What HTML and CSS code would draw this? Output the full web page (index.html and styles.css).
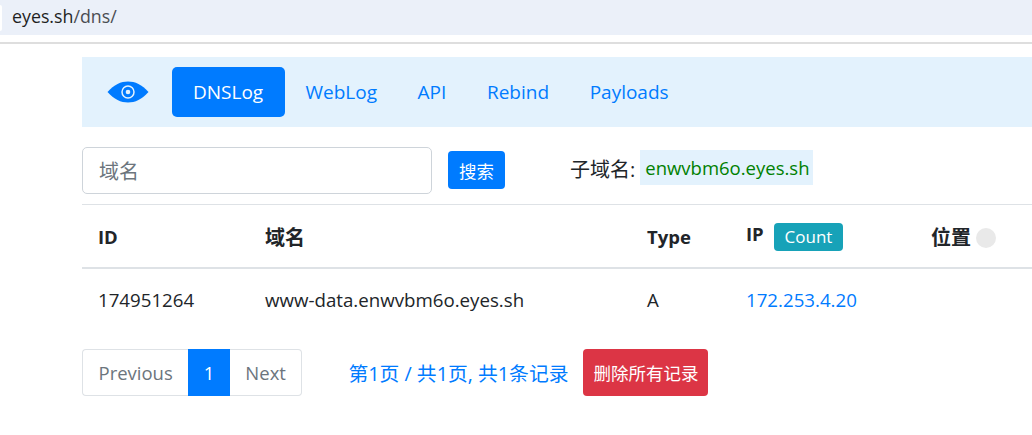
FILE: index.html
```html
<!DOCTYPE html>
<html lang="en">
<head>
  <meta charset="UTF-8" />
  <meta name="viewport" content="width=device-width, initial-scale=1.0"/>
  <title>DNSLog</title>
  <link rel="stylesheet" href="styles.css">
</head>
<body>
  <div class="browser-bar">
    <div class="address-bar">
      <span class="address-cap"></span>
      <span class="address-text"><span class="address-host">eyes.sh</span>/dns/</span>
    </div>
  </div>

  <div class="container">
    <nav class="navbar">
      <a class="brand" href="#">
        <svg width="42" height="22" viewBox="0 0 42 22">
          <path d="M0.5 11C7 3.5 14 0.5 21 0.5S35 3.5 41.5 11C35 18.500 28 21.500 21 21.500S7 18.500 0.5 11Z" fill="#007bff"/>
          <circle cx="21" cy="11" r="6" fill="none" stroke="#e3f2fd" stroke-width="1.500"/>
          <circle cx="21" cy="11" r="2.300" fill="#e3f2fd"/>
        </svg>
      </a>
      <a class="nav-link active" href="#">DNSLog</a>
      <a class="nav-link" href="#">WebLog</a>
      <a class="nav-link" href="#">API</a>
      <a class="nav-link" href="#">Rebind</a>
      <a class="nav-link" href="#">Payloads</a>
    </nav>

    <form class="search-row">
      <input class="search-input" type="text" placeholder="域名">
      <button class="search-btn" type="button">搜索</button>
      <span class="subdomain-label">子域名:</span>
      <code class="subdomain">enwvbm6o.eyes.sh</code>
    </form>

    <table class="records">
      <thead>
        <tr>
          <th class="col-id">ID</th>
          <th class="col-domain">域名</th>
          <th class="col-type">Type</th>
          <th class="col-ip">IP <span class="badge">Count</span></th>
          <th class="col-loc">位置 <span class="dot"></span></th>
        </tr>
      </thead>
      <tbody>
        <tr>
          <td>174951264</td>
          <td>www-data.enwvbm6o.eyes.sh</td>
          <td>A</td>
          <td><a href="#">172.253.4.20</a></td>
          <td></td>
        </tr>
      </tbody>
    </table>

    <div class="pager-row">
      <ul class="pagination">
        <li class="page-item">Previous</li>
        <li class="page-item current">1</li>
        <li class="page-item">Next</li>
      </ul>
      <a class="page-info" href="#">第1页 / 共1页, 共1条记录</a>
      <button class="delete-btn" type="button">删除所有记录</button>
    </div>
  </div>
</body>
</html>
```

FILE: styles.css
```css
/* Base */
html, body {
  overflow: hidden;
}

body {
  margin: 0;
  font-family: "Open Sans", "Noto Sans CJK SC", sans-serif;
  font-size: 18.500px;
  color: #212529;
  background-color: #fff;
}

a {
  text-decoration: none;
}

/* Browser address bar */
.browser-bar {
  padding-bottom: 7px;
  border-bottom: 2px solid #dedede;
}

.address-bar {
  display: flex;
  align-items: center;
  height: 35px;
  background-color: #ebf0f9;
}

.address-cap {
  width: 2px;
  height: 26px;
  background-color: #fff;
  border-radius: 0 13px 13px 0;
}

.address-text {
  margin-left: 10px;
  margin-top: -4px;
  font-size: 17.800px;
  color: #4a4d52;
}

.address-host {
  color: #1f1f1f;
}

/* Page */
.container {
  padding: 13px 0 0 82px;
}

/* Navbar */
.navbar {
  display: flex;
  align-items: center;
  height: 70px;
  padding-left: 25px;
  background-color: #e3f2fd;
}

.brand {
  display: flex;
  margin-right: 23px;
}

.nav-link {
  padding: 1px 20.300px 0;
  line-height: 49px;
  font-size: 19px;
  color: #007bff;
  border-radius: 5px;
}

.nav-link.active {
  padding: 1px 22px 0 21px;
  color: #fff;
  background-color: #007bff;
}

/* Search row */
.search-row {
  display: flex;
  align-items: center;
  height: 47px;
  margin-top: 20px;
}

.search-input {
  box-sizing: border-box;
  width: 350px;
  height: 47px;
  padding: 1px 16px 0;
  font: inherit;
  font-size: 20px;
  border: 1px solid #ced4da;
  border-radius: 5px;
}

.search-input::placeholder {
  color: #6c757d;
}

.search-btn {
  width: 57px;
  height: 38px;
  margin: -1px 0 0 16px;
  padding: 0;
  font: inherit;
  font-size: 17.500px;
  color: #fff;
  background-color: #007bff;
  border: none;
  border-radius: 4px;
}

.subdomain-label {
  margin-left: 65px;
  margin-top: -4px;
  font-size: 20px;
}

.subdomain {
  margin-left: 5px;
  margin-top: -7px;
  padding: 0 4px 0 5px;
  line-height: 35px;
  font-family: inherit;
  color: #008000;
  background-color: #e3f2fd;
}

/* Records table */
.records {
  table-layout: fixed;
  width: 950px;
  margin-top: 10px;
  border-collapse: collapse;
}

.records th, .records td {
  padding: 0 16px;
  text-align: left;
  vertical-align: middle;
}

.records th {
  height: 62px;
  font-weight: 700;
  border-top: 1px solid #dee2e6;
  border-bottom: 2px solid #dee2e6;
}

.records td {
  height: 61px;
  font-size: 18.700px;
}

.records a {
  color: #007bff;
}

.col-id { width: 135px; }
.col-domain { width: 350px; font-size: 20px; }
.col-type { width: 67px; }
.col-ip { width: 153px; }
.col-loc { width: 85px; font-size: 20px; white-space: nowrap; }

.badge {
  display: inline-block;
  margin-left: 5px;
  padding: 0 11px;
  line-height: 28px;
  vertical-align: -2px;
  font-size: 17px;
  font-weight: 400;
  color: #fff;
  background-color: #17a2b8;
  border-radius: 4px;
}

.dot {
  display: inline-block;
  width: 20px;
  height: 20px;
  vertical-align: -3px;
  background-color: #e9e9e9;
  border-radius: 50%;
}

/* Pagination */
.pager-row {
  display: flex;
  align-items: center;
  margin-top: 19px;
}

.pagination {
  display: flex;
  margin: 0;
  padding: 0;
  list-style: none;
}

.page-item {
  padding: 0 15.500px;
  line-height: 45px;
  color: #6c757d;
  border: 1px solid #dee2e6;
}

.page-item:first-child {
  border-right: none;
  border-radius: 4px 0 0 4px;
}

.page-item:last-child {
  border-left: none;
  border-radius: 0 4px 4px 0;
}

.page-item.current {
  color: #fff;
  background-color: #007bff;
  border-color: #007bff;
  border-width: 1px 0;
}

.page-info {
  margin-left: 46px;
  font-size: 19.800px;
  color: #007bff;
}

.delete-btn {
  width: 125px;
  height: 47px;
  margin-left: 15px;
  padding: 0;
  font: inherit;
  font-size: 17.500px;
  color: #fff;
  background-color: #dc3545;
  border: none;
  border-radius: 4px;
}
```
